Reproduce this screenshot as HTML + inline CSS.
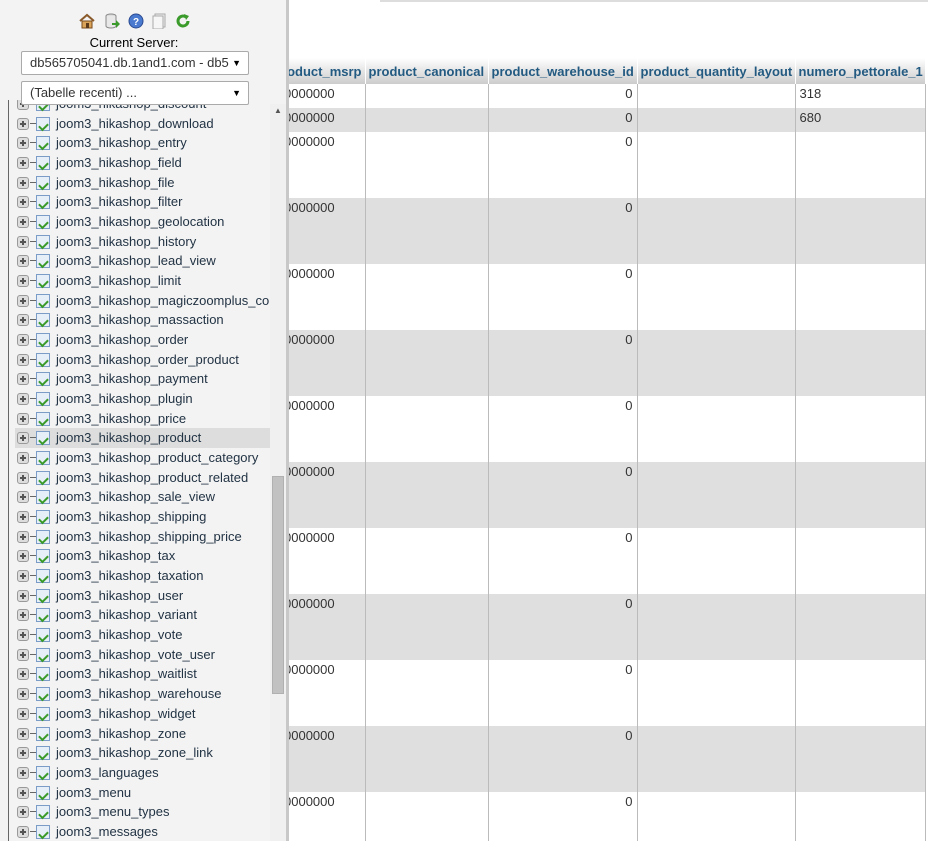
<!DOCTYPE html>
<html><head><style>
*{margin:0;padding:0;box-sizing:border-box}
body{width:928px;height:841px;overflow:hidden;background:#fff;font-family:"Liberation Sans",Arial,sans-serif;font-size:13px;position:relative}
#side{position:absolute;left:0;top:0;width:289px;height:841px;background:#f3f3f3;border-right:3px solid #c8c8c8;overflow:hidden;z-index:2}
.icons{position:absolute;top:13px;left:79px;height:18px}
.ic{position:absolute;top:0;width:16px;height:16px}
.lbl{position:absolute;top:35px;left:0;width:268px;text-align:center;font-size:13px;color:#000}
.sel{position:absolute;left:21px;width:228px;height:24px;background:#fff;border:1px solid #aaa;border-radius:2px;font-size:13px;line-height:22px;padding-left:8px;color:#333;z-index:3}
.sel:after{content:"\25BC";position:absolute;right:7px;top:0;font-size:9px;color:#000}
#list{position:absolute;top:100px;left:0;width:270px;height:741px;overflow:hidden}
#list .in{position:absolute;top:-6px;left:0;width:270px}
.vl{position:absolute;left:8px;top:0;width:1px;height:900px;background:#666}
.it{position:relative;height:19.68px;line-height:19.68px;padding-left:56px;color:#234;white-space:nowrap}
.it.hl{background:#ddd;margin-left:15px;padding-left:41px}
.it.hl .pl{left:2px}.it.hl .tb{left:21px}
.pl{position:absolute;left:17px;top:4px;width:12px;height:12px;border:1px solid #999;border-radius:3px;background:#ddd}
.pl:before{content:"";position:absolute;left:2px;top:4px;width:6px;height:2px;background:#555}
.pl:after{content:"";position:absolute;left:4px;top:2px;width:2px;height:6px;background:#555}
.dash{position:absolute;left:30px;top:9px;width:6px;height:1px;background:#666}
.tb{position:absolute;left:36px;top:3px;width:14px;height:14px;border:1px solid #7a9cc6;background:#e6eef8}
.tb:after{content:"";position:absolute;left:2px;top:5px;width:7px;height:4px;border-left:2px solid #3a9a2a;border-bottom:2px solid #3a9a2a;transform:rotate(-45deg)}
.it.hl .dash{left:15px}
#sb{position:absolute;left:270px;top:104px;width:16px;height:737px;background:#f0f0f0}
#thumb{position:absolute;left:272px;top:476px;width:12px;height:218px;background:#c1c1c1;border:1px solid #b0b0b0}
#arr{position:absolute;left:274px;top:106px;font-size:8px;color:#555}
#main{position:absolute;left:289px;top:0;width:639px;height:841px;overflow:hidden}
.topbar{position:absolute;left:91px;top:0;width:548px;height:2px;background:#ddd}
table{position:absolute;left:-19px;top:58px;border-collapse:collapse;table-layout:fixed;width:655px;font-size:13px;color:#333}
th{height:26px;background:linear-gradient(#fff,#ccc);color:#235a81;font-weight:bold;text-align:right;padding:0 3px;border-right:1px solid #fff;white-space:nowrap;overflow:hidden}
th.l{text-align:left}
td{border-right:1px solid #bbb;padding:2px 4px;vertical-align:top;height:24px;line-height:16px;overflow:hidden}
tr.t td{height:66px}
tr.g td{background:#dfdfdf}
td.r{text-align:right}
</style></head><body>
<div id="side">
 <div class="icons">
  <svg class="ic" style="left:0" viewBox="0 0 16 16"><path d="M1 8L8 2l7 6" fill="none" stroke="#8a5a2a" stroke-width="2"/><rect x="3" y="8" width="10" height="7" fill="#d9a45a" stroke="#7a4a1a"/><rect x="7" y="10" width="3" height="5" fill="#5a3a1a"/></svg>
  <svg class="ic" style="left:25px" viewBox="0 0 16 16"><ellipse cx="7" cy="3" rx="5" ry="2" fill="#ddd" stroke="#888"/><path d="M2 3v10c0 1 2 2 5 2s5-1 5-2V3" fill="#e8e8e8" stroke="#888"/><path d="M8 10h4V7l4 4-4 4v-3H8z" fill="#3a9a2a"/></svg>
  <svg class="ic" style="left:49px" viewBox="0 0 16 16"><circle cx="8" cy="8" r="7" fill="#4a7ad0" stroke="#2a4a90"/><text x="8" y="12" font-size="10" fill="#fff" text-anchor="middle" font-family="Liberation Sans" font-weight="bold">?</text></svg>
  <svg class="ic" style="left:72px" viewBox="0 0 16 16"><rect x="4" y="1" width="10" height="13" fill="#eee" stroke="#aaa"/><rect x="2" y="3" width="10" height="13" fill="#f6f6f6" stroke="#aaa"/></svg>
  <svg class="ic" style="left:96px" viewBox="0 0 16 16"><path d="M13 8a5 5 0 1 1-2-4" fill="none" stroke="#3a9a2a" stroke-width="3"/><path d="M9 1l5 2-3 4z" fill="#3a9a2a"/></svg>
 </div>
 <div class="lbl">Current Server:</div>
 <div class="sel" style="top:51px">db565705041.db.1and1.com - db5</div>
 <div class="sel" style="top:81px">(Tabelle recenti) ...</div>
 <div id="list"><div class="in"><div class="vl"></div>
 </div></div>
 <div id="sb"></div><div id="thumb"></div><div id="arr">▲</div>
</div>
<div id="main">
 <div class="topbar"></div>
 <table>
  <colgroup><col style="width:95px"><col style="width:123px"><col style="width:149px"><col style="width:158px"><col style="width:130px"></colgroup>
  <tr><th>product_msrp</th><th class="l">product_canonical</th><th class="l">product_warehouse_id</th><th class="l">product_quantity_layout</th><th class="l">numero_pettorale_1</th></tr>
 </table>
</div>
<script>
var names=["hikashop_discount","hikashop_download","hikashop_entry","hikashop_field","hikashop_file","hikashop_filter","hikashop_geolocation","hikashop_history","hikashop_lead_view","hikashop_limit","hikashop_magiczoomplus_co","hikashop_massaction","hikashop_order","hikashop_order_product","hikashop_payment","hikashop_plugin","hikashop_price","hikashop_product","hikashop_product_category","hikashop_product_related","hikashop_sale_view","hikashop_shipping","hikashop_shipping_price","hikashop_tax","hikashop_taxation","hikashop_user","hikashop_variant","hikashop_vote","hikashop_vote_user","hikashop_waitlist","hikashop_warehouse","hikashop_widget","hikashop_zone","hikashop_zone_link","languages","menu","menu_types","messages"];
var h="";names.forEach(function(n){h+='<div class="it'+(n=="hikashop_product"?' hl':'')+'"><span class="pl"></span><span class="dash"></span><span class="tb"></span>joom3_'+n+'</div>';});
document.querySelector("#list .in").innerHTML+=h;
var t=document.querySelector("table"),r="";
var c='<td style="padding-left:14px">0000000</td>';
r+='<tr>'+c+'<td></td><td class="r">0</td><td></td><td>318</td></tr>';
r+='<tr class="g">'+c+'<td></td><td class="r">0</td><td></td><td>680</td></tr>';
for(var i=0;i<11;i++){r+='<tr class="t'+(i%2?' g':'')+'">'+c+'<td></td><td class="r">0</td><td></td><td></td></tr>';}
t.innerHTML+=r;
</script>
</body></html>
